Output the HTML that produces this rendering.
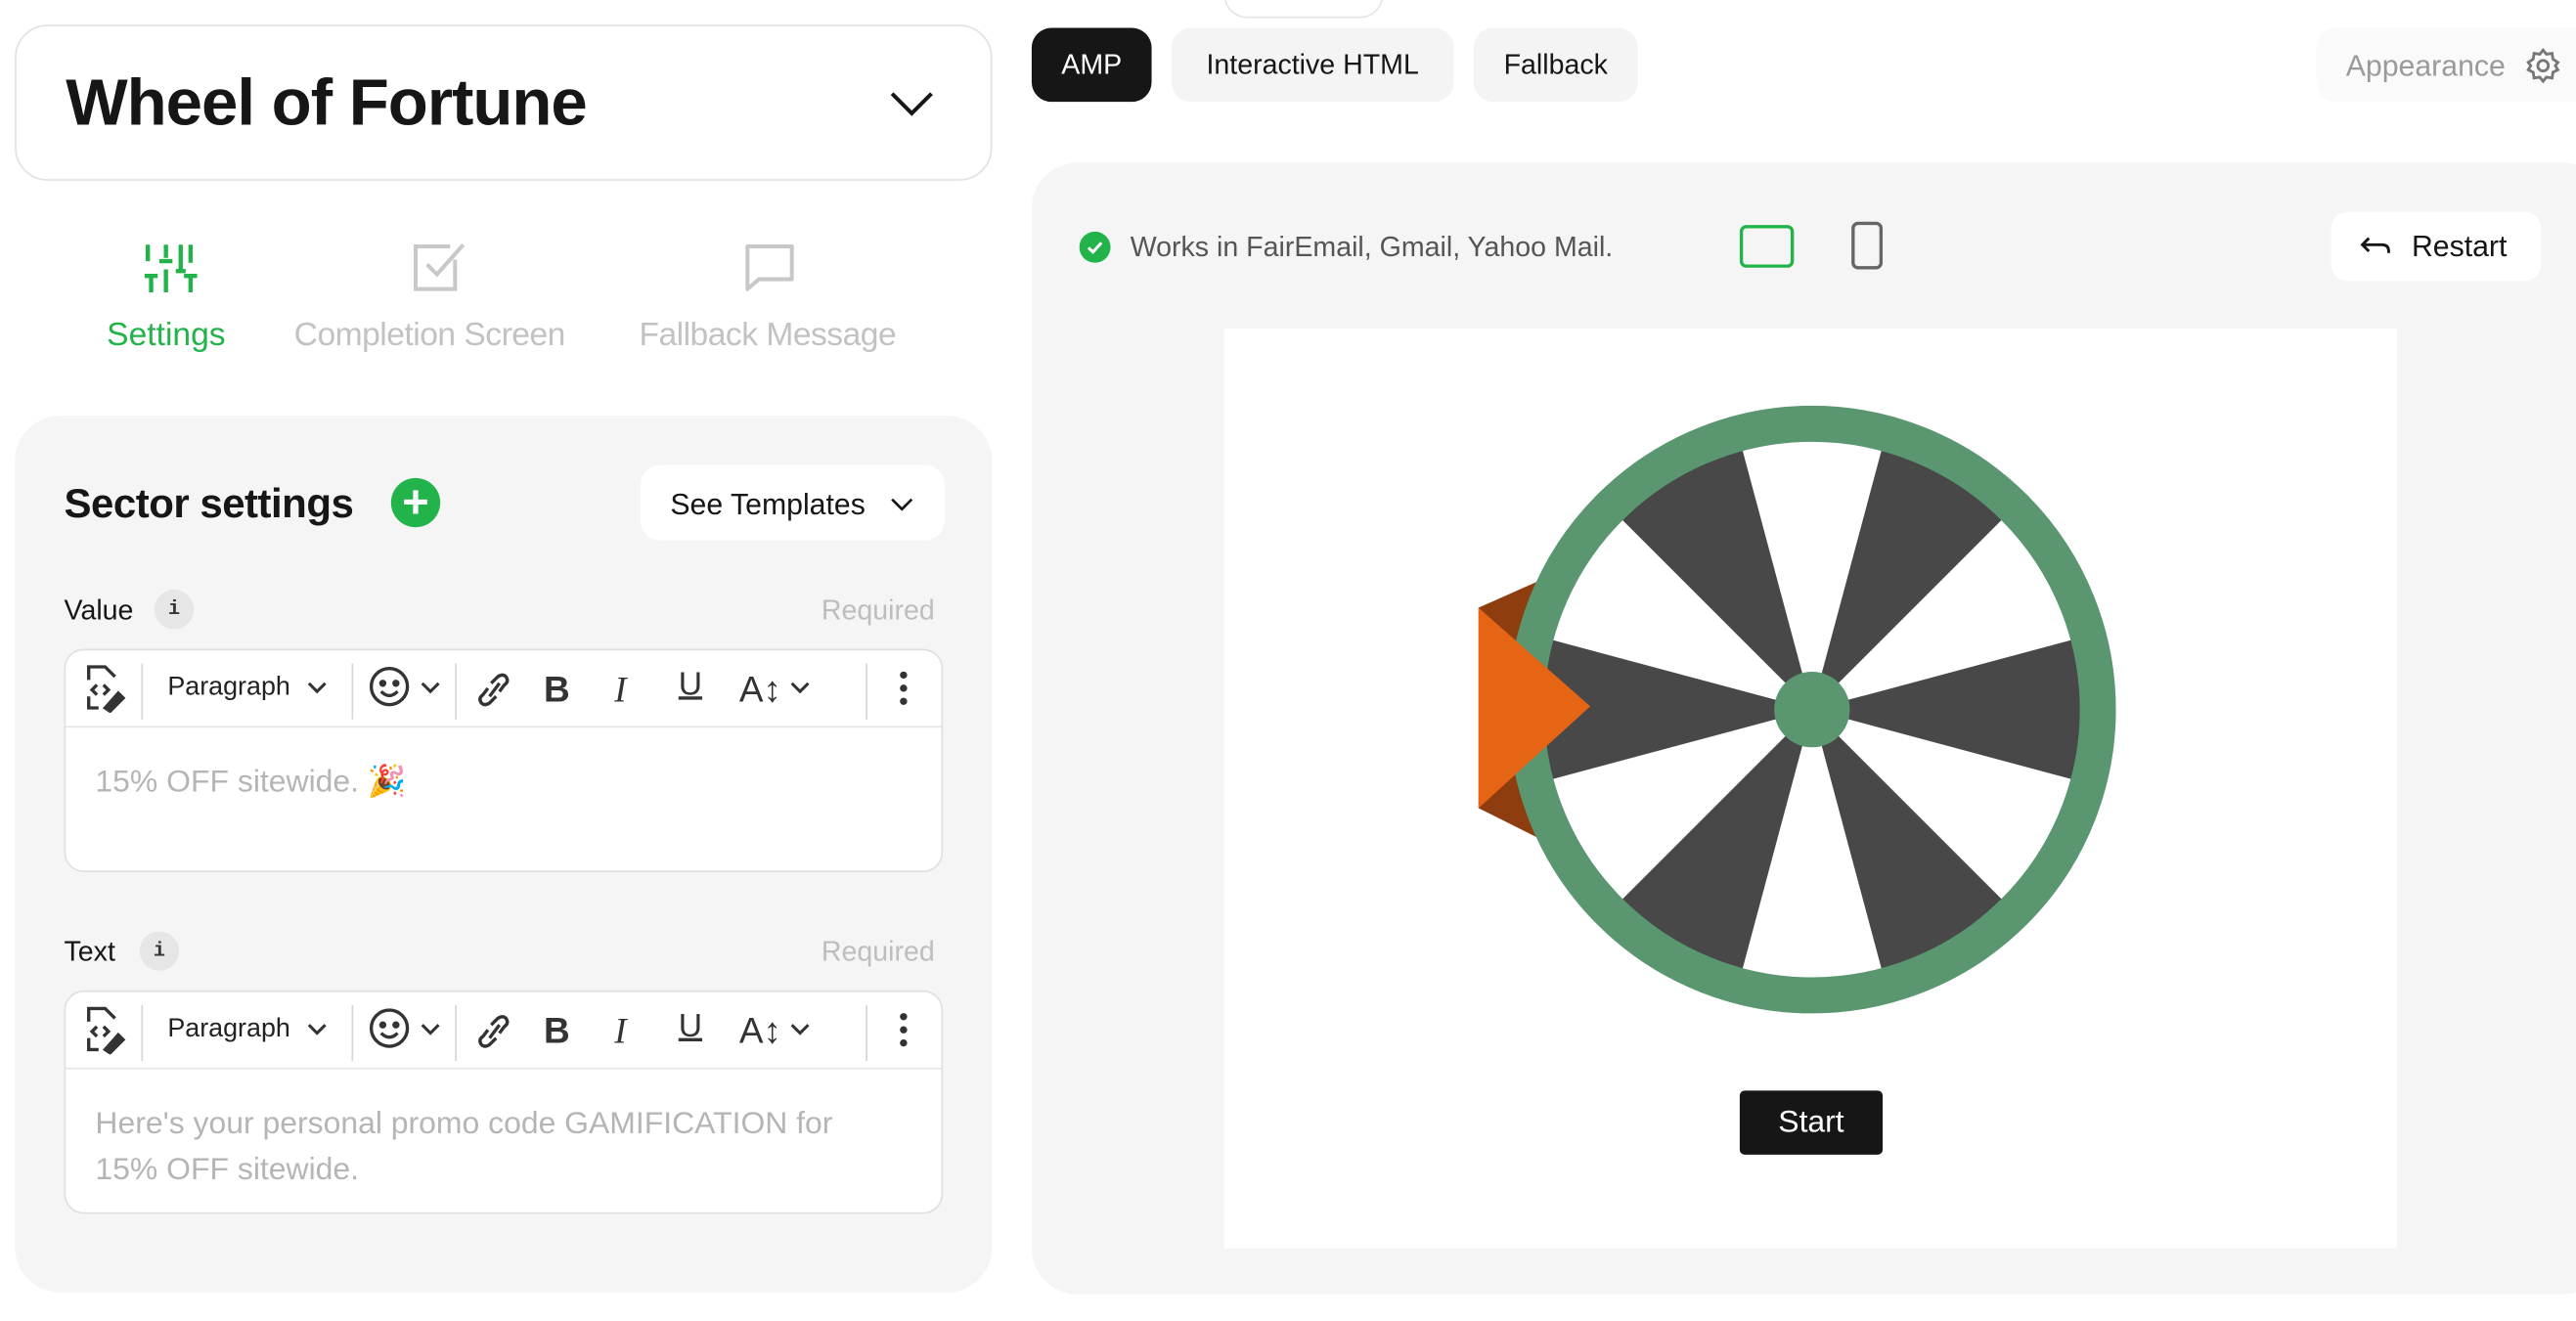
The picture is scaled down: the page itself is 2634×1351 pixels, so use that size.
<!DOCTYPE html>
<html><head><meta charset="utf-8"><style>
html,body{margin:0;padding:0;background:#fff;overflow:hidden;width:2634px;height:1350px}
#w{position:absolute;left:0;top:0;width:1568px;height:804px;transform:scale(1.6798);transform-origin:0 0;font-family:"Liberation Sans","Noto Sans CJK SC",sans-serif;color:#161616}
.a{position:absolute}
.tb{position:absolute;left:39px;width:533px;height:134px;background:#fff;border:1px solid #e0e0e0;border-radius:12px}
.tbar{position:absolute;left:0;right:0;top:0;height:46px;border-bottom:1px solid #e4e4e4}
.sep{position:absolute;top:8px;width:1px;height:34px;background:#d6d6d6}
.lbl{position:absolute;font-size:17px;color:#161616}
.req{position:absolute;font-size:17px;color:#bdbdbd}
.ib{position:absolute;width:24px;height:24px;border-radius:12px;background:#e6e6e6;font-size:12px;text-align:center;line-height:24px;font-family:"Liberation Mono",monospace;font-weight:bold;color:#333}
.pill{position:absolute;top:17px;height:45px;border-radius:12px;background:#f4f4f4;font-size:17px;line-height:46px;text-align:center}
</style></head><body><div id="w">

<div class="a" style="left:745px;top:-20px;width:95px;height:29px;border:1px solid #e6e6e6;border-radius:14px"></div>

<div class="a" style="left:9px;top:15px;width:593px;height:93px;border:1px solid #e2e2e2;border-radius:20px"></div>
<div class="a" style="left:40px;top:41px;font-size:40px;font-weight:bold;letter-spacing:-0.6px">Wheel of Fortune</div>
<svg class="a" style="left:540px;top:53px" width="30" height="20"><path d="M3 4 L15 16 L27 4" fill="none" stroke="#161616" stroke-width="2.4"/></svg>

<svg class="a" style="left:86px;top:146px" width="38" height="34" stroke="#22b34a" stroke-width="2.6" fill="none">
<path d="M4 3V13M2 22H10M6 22V32M15 3V11M15 18V32M11 13H19M24 3V19M30 3V14M30 22V32M26 22H34M21 19H27"/></svg>
<div class="a" style="left:65px;top:193px;font-size:20px;color:#22b34a">Settings</div>
<svg class="a" style="left:250px;top:146px" width="36" height="34" fill="none" stroke="#c8c8c8" stroke-width="2.4"><path d="M27 12V30H3V4H24"/><path d="M10 15L16 21L32 3"/></svg>
<div class="a" style="left:179px;top:193px;font-size:20px;color:#c2c2c2;letter-spacing:-0.3px">Completion Screen</div>
<svg class="a" style="left:452px;top:146px" width="34" height="34" fill="none" stroke="#c8c8c8" stroke-width="2.4"><path d="M3 4H30V24H10L3 30Z" stroke-linejoin="round"/></svg>
<div class="a" style="left:389px;top:193px;font-size:20px;color:#c2c2c2;letter-spacing:-0.3px">Fallback Message</div>

<div class="a" style="left:9px;top:253px;width:595px;height:534px;background:#f5f5f5;border-radius:28px"></div>
<div class="a" style="left:39px;top:293px;font-size:25px;font-weight:bold;letter-spacing:-0.3px">Sector settings</div>
<div class="a" style="left:238px;top:291px;width:30px;height:30px;border-radius:15px;background:#22b34a;color:#fff;font-size:28px;line-height:29px;text-align:center;font-weight:bold">+</div>
<div class="a" style="left:390px;top:283px;width:185px;height:46px;background:#fff;border-radius:12px"></div>
<div class="a" style="left:408px;top:297px;font-size:18px">See Templates</div>
<svg class="a" style="left:541px;top:301px" width="16" height="12"><path d="M2 3L8 9L14 3" fill="none" stroke="#161616" stroke-width="1.6"/></svg>

<div class="lbl" style="left:39px;top:362px">Value</div>
<div class="ib" style="left:94px;top:359px">i</div>
<div class="req" style="left:500px;top:362px">Required</div>

<div class="tb" style="top:395px">
 <div class="tbar">
  <svg class="a" style="left:10px;top:8px" width="28" height="30" fill="none" stroke="#333" stroke-width="2"><path d="M4 10V2H14L20 8M4 20V27H10"/><path d="M9 13L6 16L9 19M13 13L16 16L13 19"/><path d="M14 27L22 18L25 21L17 29Z" fill="#333"/></svg>
  <div class="sep" style="left:46px"></div>
  <div class="a" style="left:62px;top:14px;font-size:16px;color:#222">Paragraph</div>
  <svg class="a" style="left:147px;top:18px" width="12" height="10"><path d="M1 2L6 7L11 2" fill="none" stroke="#333" stroke-width="1.8"/></svg>
  <div class="sep" style="left:174px"></div>
  <svg class="a" style="left:184px;top:9px" width="28" height="28" fill="none" stroke="#333" stroke-width="2"><circle cx="13" cy="13" r="11"/><circle cx="9" cy="11" r="1.2" fill="#333"/><circle cx="17" cy="11" r="1.2" fill="#333"/><path d="M8 16Q13 21 18 16"/></svg>
  <svg class="a" style="left:216px;top:18px" width="12" height="10"><path d="M1 2L6 7L11 2" fill="none" stroke="#333" stroke-width="1.8"/></svg>
  <div class="sep" style="left:237px"></div>
  <svg class="a" style="left:250px;top:12px" width="22" height="24" fill="none" stroke="#333" stroke-width="2"><path d="M9 8L13 4Q16 2 18 4Q20 7 17 9L14 13M12 16L8 20Q5 22 3 20Q1 17 4 15L7 11M8 16L14 8"/></svg>
  <div class="a" style="left:291px;top:11px;font-size:22px;font-weight:bold;color:#333">B</div>
  <div class="a" style="left:334px;top:11px;font-size:22px;font-style:italic;font-family:'Liberation Serif',serif;color:#333">I</div>
  <div class="a" style="left:373px;top:10px;font-size:20px;color:#333;text-decoration:underline">U</div>
  <div class="a" style="left:410px;top:11px;font-size:22px;color:#333">A↕</div>
  <svg class="a" style="left:441px;top:18px" width="12" height="10"><path d="M1 2L6 7L11 2" fill="none" stroke="#333" stroke-width="1.8"/></svg>
  <div class="sep" style="left:487px"></div>
  <svg class="a" style="left:506px;top:12px" width="8" height="24" fill="#333"><circle cx="4" cy="3" r="2.2"/><circle cx="4" cy="11" r="2.2"/><circle cx="4" cy="19" r="2.2"/></svg>
 </div>
 <div class="a" style="left:18px;top:68px;font-size:19px;color:#b5b5b5">15% OFF sitewide. 🎉</div>
</div>

<div class="lbl" style="left:39px;top:570px">Text</div>
<div class="ib" style="left:85px;top:567px">i</div>
<div class="req" style="left:500px;top:570px">Required</div>

<div class="tb" style="top:603px">
 <div class="tbar">
  <svg class="a" style="left:10px;top:8px" width="28" height="30" fill="none" stroke="#333" stroke-width="2"><path d="M4 10V2H14L20 8M4 20V27H10"/><path d="M9 13L6 16L9 19M13 13L16 16L13 19"/><path d="M14 27L22 18L25 21L17 29Z" fill="#333"/></svg>
  <div class="sep" style="left:46px"></div>
  <div class="a" style="left:62px;top:14px;font-size:16px;color:#222">Paragraph</div>
  <svg class="a" style="left:147px;top:18px" width="12" height="10"><path d="M1 2L6 7L11 2" fill="none" stroke="#333" stroke-width="1.8"/></svg>
  <div class="sep" style="left:174px"></div>
  <svg class="a" style="left:184px;top:9px" width="28" height="28" fill="none" stroke="#333" stroke-width="2"><circle cx="13" cy="13" r="11"/><circle cx="9" cy="11" r="1.2" fill="#333"/><circle cx="17" cy="11" r="1.2" fill="#333"/><path d="M8 16Q13 21 18 16"/></svg>
  <svg class="a" style="left:216px;top:18px" width="12" height="10"><path d="M1 2L6 7L11 2" fill="none" stroke="#333" stroke-width="1.8"/></svg>
  <div class="sep" style="left:237px"></div>
  <svg class="a" style="left:250px;top:12px" width="22" height="24" fill="none" stroke="#333" stroke-width="2"><path d="M9 8L13 4Q16 2 18 4Q20 7 17 9L14 13M12 16L8 20Q5 22 3 20Q1 17 4 15L7 11M8 16L14 8"/></svg>
  <div class="a" style="left:291px;top:11px;font-size:22px;font-weight:bold;color:#333">B</div>
  <div class="a" style="left:334px;top:11px;font-size:22px;font-style:italic;font-family:'Liberation Serif',serif;color:#333">I</div>
  <div class="a" style="left:373px;top:10px;font-size:20px;color:#333;text-decoration:underline">U</div>
  <div class="a" style="left:410px;top:11px;font-size:22px;color:#333">A↕</div>
  <svg class="a" style="left:441px;top:18px" width="12" height="10"><path d="M1 2L6 7L11 2" fill="none" stroke="#333" stroke-width="1.8"/></svg>
  <div class="sep" style="left:487px"></div>
  <svg class="a" style="left:506px;top:12px" width="8" height="24" fill="#333"><circle cx="4" cy="3" r="2.2"/><circle cx="4" cy="11" r="2.2"/><circle cx="4" cy="19" r="2.2"/></svg>
 </div>
 <div class="a" style="left:18px;top:67px;width:480px;font-size:19px;line-height:28px;color:#b5b5b5">Here's your personal promo code GAMIFICATION for 15% OFF sitewide.</div>
</div>

<div class="pill" style="left:628px;width:73px;background:#161616;color:#fff">AMP</div>
<div class="pill" style="left:713px;width:172px">Interactive HTML</div>
<div class="pill" style="left:897px;width:100px">Fallback</div>
<div class="a" style="left:1410px;top:17px;width:170px;height:45px;border-radius:12px;background:#fafafa"></div>
<div class="a" style="left:1428px;top:30px;font-size:18px;color:#9a9a9a">Appearance</div>
<svg class="a" style="left:1537px;top:29px" width="22" height="22" fill="none" stroke="#777" stroke-width="1.7"><path d="M11 1.5L13 4L16.5 3.5L17 7L20 9L18.5 11L20 13.5L17 15L16.5 18.5L13 18L11 20.5L9 18L5.5 18.5L5 15L2 13.5L3.5 11L2 9L5 7L5.5 3.5L9 4Z"/><circle cx="11" cy="11" r="3.2"/></svg>

<div class="a" style="left:628px;top:99px;width:960px;height:689px;background:#f5f5f5;border-radius:28px"></div>
<svg class="a" style="left:657px;top:141px" width="19" height="19"><circle cx="9.5" cy="9.5" r="9.5" fill="#22b34a"/><path d="M5.5 9.8L8.3 12.4L13.5 6.8" fill="none" stroke="#fff" stroke-width="1.8"/></svg>
<div class="a" style="left:688px;top:141px;font-size:17px;color:#555">Works in FairEmail, Gmail, Yahoo Mail.</div>
<div class="a" style="left:1059px;top:137px;width:29px;height:22px;border:2px solid #22b34a;border-radius:4px"></div>
<div class="a" style="left:1127px;top:135px;width:15px;height:25px;border:2px solid #666;border-radius:4px"></div>
<div class="a" style="left:1419px;top:129px;width:128px;height:42px;background:#fff;border-radius:10px"></div>
<svg class="a" style="left:1436px;top:142px" width="20" height="16" fill="none" stroke="#161616" stroke-width="1.7"><path d="M6 3L2 7L6 11M2 7H14Q18 7 18 11V12"/></svg>
<div class="a" style="left:1468px;top:140px;font-size:18px">Restart</div>

<div class="a" style="left:745px;top:200px;width:714px;height:560px;background:#fff"></div>
<svg class="a" style="left:0;top:0" width="1568" height="804">
 <polygon points="900,370 936,354 936,510 900,492" fill="#8e3d0f"/>
 <g transform="translate(1103,432)">
  <circle r="175" fill="#fff"/>
  <g fill="#484848">
   <polygon points="0,0 173.9,46.6 173.9,-46.6"/>
   <polygon points="0,0 127.3,-127.3 46.6,-173.9"/>
   <polygon points="0,0 -46.6,-173.9 -127.3,-127.3"/>
   <polygon points="0,0 -173.9,-46.6 -173.9,46.6"/>
   <polygon points="0,0 -127.3,127.3 -46.6,173.9"/>
   <polygon points="0,0 46.6,173.9 127.3,127.3"/>
  </g>
  <circle r="174" fill="none" stroke="#5a9770" stroke-width="22"/>
  <circle r="23" fill="#5a9770"/>
 </g>
 <polygon points="900,370 968,430 900,492" fill="#e56515"/>
</svg>
<div class="a" style="left:1059px;top:664px;width:87px;height:39px;background:#161616;border-radius:3px;color:#fff;font-size:19px;line-height:40px;text-align:center">Start</div>

</div></body></html>
